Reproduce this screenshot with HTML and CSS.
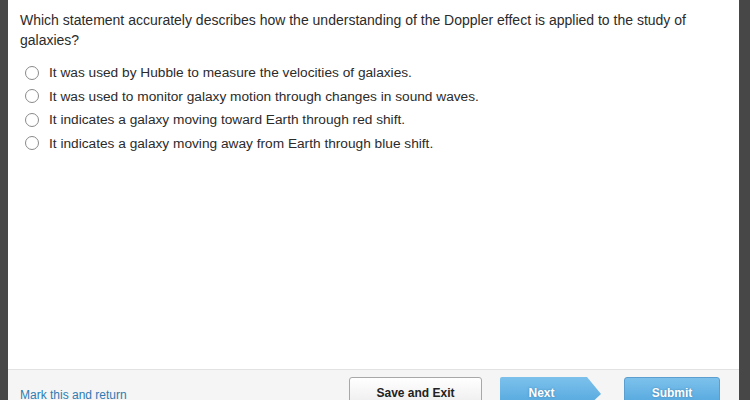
FILE: index.html
```html
<!DOCTYPE html>
<html lang="en">
<head>
  <meta charset="UTF-8">
  <meta name="viewport" content="width=device-width, initial-scale=1.0">
  <title>Question</title>
  <link rel="stylesheet" href="styles.css">
</head>
<body>
  <div class="frame">
    <div class="edge edge-left"></div>

    <main class="page">
      <section class="question">
        <p class="prompt">Which statement accurately describes how the understanding of the Doppler effect is applied to the study of galaxies?</p>

        <ul class="choices">
          <li class="choice"><span class="radio"></span>It was used by Hubble to measure the velocities of galaxies.</li>
          <li class="choice"><span class="radio"></span>It was used to monitor galaxy motion through changes in sound waves.</li>
          <li class="choice"><span class="radio"></span>It indicates a galaxy moving toward Earth through red shift.</li>
          <li class="choice"><span class="radio"></span>It indicates a galaxy moving away from Earth through blue shift.</li>
        </ul>
      </section>

      <footer class="toolbar">
        <a class="mark" href="#">Mark this and return</a>
        <div class="actions">
          <button class="btn btn-save">Save and Exit</button>
          <button class="btn btn-next">Next</button>
          <button class="btn btn-submit">Submit</button>
        </div>
      </footer>
    </main>

    <div class="edge edge-right"></div>
  </div>
</body>
</html>
```

FILE: styles.css
```css
body {
  margin: 0;
  font-family: "Liberation Sans", Arial, sans-serif;
  color: #2b2b2b;
  background-color: #fff;
}

.frame {
  display: flex;
  height: 400px;
  overflow: hidden;
}

.edge {
  background-color: #474747;
}

.edge-left {
  width: 8px;
}

.edge-right {
  width: 11px;
}

.page {
  flex: 1;
  display: flex;
  flex-direction: column;
}

.question {
  height: 369px;
  flex-shrink: 0;
  padding: 10px 12px 0 12px;
  box-sizing: border-box;
}

.prompt {
  margin: 0;
  font-size: 14px;
  line-height: 20px;
  padding-right: 30px;
}

.choices {
  list-style: none;
  margin: 11px 0 0 0;
  padding: 0;
}

.choice {
  display: flex;
  align-items: center;
  height: 23.5px;
  font-size: 13.7px;
  padding-left: 5px;
}

.radio {
  width: 12px;
  height: 12px;
  border: 1px solid #8a8a8a;
  border-radius: 50%;
  background-color: #fff;
  margin-right: 10px;
  flex-shrink: 0;
}

/* bottom bar with navigation */
.toolbar {
  flex: 1;
  display: flex;
  align-items: flex-start;
  border-top: 1px solid #e2e2e2;
  background-color: #f5f5f5;
  padding: 7px 19px 0 12px;
}

.mark {
  margin-top: 11px;
  font-size: 12px;
  color: #2f7bb3;
  text-decoration: none;
}

.actions {
  margin-left: auto;
  display: flex;
}

.btn {
  height: 30px;
  font-family: "Liberation Sans", Arial, sans-serif;
  font-size: 12px;
  font-weight: bold;
  border-radius: 3px;
  cursor: pointer;
  padding: 2px 0 0 0;
}

.btn-save {
  width: 133px;
  color: #222;
  border: 1px solid #a8a8a8;
  background: linear-gradient(#ffffff, #ececec);
}

.btn-next,
.btn-submit {
  color: #fff;
  text-shadow: 0 0 2px #3a7fae;
  border: 1px solid #5a9fcf;
  background: linear-gradient(#7cc1ec, #52a6dd);
}

.btn-next {
  width: 101px;
  margin-left: 18px;
  padding-right: 18px;
  border: none;
  border-radius: 2px;
  clip-path: polygon(0 0, 87px 0, 100% 17px, 87px 100%, 0 100%);
}

.btn-submit {
  width: 96px;
  margin-left: 23px;
}
```
